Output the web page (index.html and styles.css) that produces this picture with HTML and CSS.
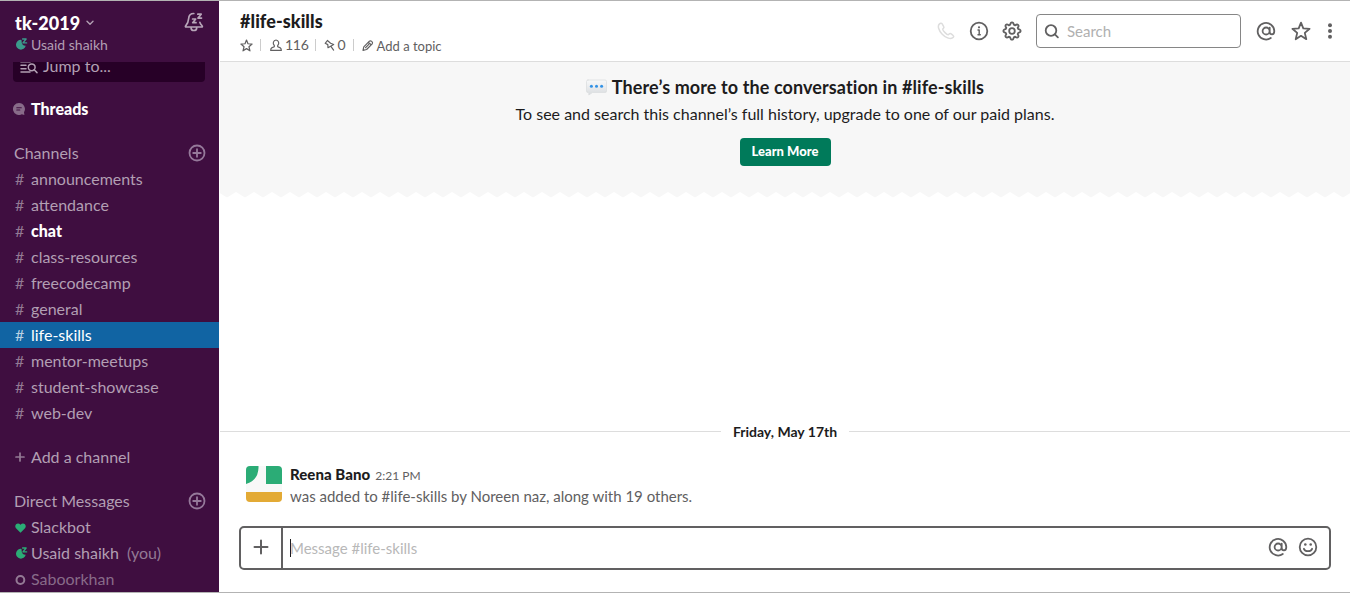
FILE: index.html
```html
<!DOCTYPE html>
<html lang="en">
<head>
<meta charset="utf-8">
<title>#life-skills</title>
<link rel="stylesheet" href="styles.css">
</head>
<body>
<svg class="defs" width="0" height="0">
  <symbol id="at" viewBox="0 0 20 20"><path d="M14.8 17A8.300 8.300 0 1 1 18.300 10c0 2.100-.8 3.300-2.300 3.300-1.500 0-2.300-.9-2.300-2.300V6.700M13.600 10a3.500 3.500 0 1 1-7 0 3.500 3.500 0 0 1 7 0z"/></symbol>
  <symbol id="star" viewBox="0 0 20 20"><path d="M10 1.600l2.300 5.700 6.300.5-4.800 4.100 1.500 6.300-5.300-3.400-5.300 3.400 1.500-6.300-4.800-4.100 6.300-.5z"/></symbol>
  <symbol id="plus-circle" viewBox="0 0 18 18"><circle cx="9" cy="9" r="7.500"/><path d="M9 5.200v7.600M5.200 9h7.600"/></symbol>
  <symbol id="snooze" viewBox="0 0 13 12"><path class="solid" d="M6.500 1.900A4.900 4.900 0 1 0 10.700 7.800Q6.500 7.800 6.500 1.900z"/><path class="zed" d="M7.600 1h3.500L8 4.900h3.600"/></symbol>
</svg>
<div class="app">
  <aside class="sidebar">
    <header class="team">
      <div class="team-row"><span class="team-name">tk-2019</span>
        <svg class="chevron" width="8" height="6" viewBox="0 0 8 6"><path d="M1 1.200l3 3 3-3"/></svg>
        <svg class="bell" width="20" height="20" viewBox="0 0 20 20"><path d="M9.800 1.500C6.300 1.500 4.800 3.800 4.600 6.700c-.2 3-.6 4.700-2.900 7.100-.5.6-.3 1.200.5 1.200h15.400c.8 0 1-.7.5-1.200-1.100-1.200-1.800-2.200-2.200-3.400M7.100 16.100c.3 3.200 5.300 3.200 5.600 0"/><path d="M13.800 2.200h3.400l-3.200 3.900h3.500M8.600 7h3.100l-3 3.700h3.300"/></svg>
      </div>
      <div class="me"><svg class="snooze teal" width="13" height="12"><use href="#snooze"/></svg><span>Usaid shaikh</span></div>
    </header>
    <div class="jump"><svg width="18" height="14" viewBox="0 0 18 14"><path d="M1 1.800h9M1 5.200h5M1 8.700h5M1 12.100h9"/><circle cx="11.700" cy="7.300" r="3.400"/><path d="M14.200 9.800l2.800 2.800"/></svg><span>Jump to...</span></div>
    <div class="row threads"><i class="mark"><svg width="12" height="12" viewBox="0 0 12 12"><path class="solid" d="M6 0a6 6 0 1 0 2.800 11.300l2.600.6-.4-2.700A6 6 0 0 0 6 0z"/><path class="lines" d="M3.800 4.800h4.500M3.800 7h3"/></svg></i><span>Threads</span></div>
    <div class="row section"><span>Channels</span><svg class="add" width="18" height="18"><use href="#plus-circle"/></svg></div>
    <div class="row"><i class="mark hash">#</i><span>announcements</span></div>
    <div class="row"><i class="mark hash">#</i><span>attendance</span></div>
    <div class="row unread"><i class="mark hash">#</i><span>chat</span></div>
    <div class="row"><i class="mark hash">#</i><span>class-resources</span></div>
    <div class="row"><i class="mark hash">#</i><span>freecodecamp</span></div>
    <div class="row"><i class="mark hash">#</i><span>general</span></div>
    <div class="row active"><i class="mark hash">#</i><span>life-skills</span></div>
    <div class="row"><i class="mark hash">#</i><span>mentor-meetups</span></div>
    <div class="row"><i class="mark hash">#</i><span>student-showcase</span></div>
    <div class="row"><i class="mark hash">#</i><span>web-dev</span></div>
    <div class="row add-channel"><i class="mark"><svg class="small-plus" width="10" height="10" viewBox="0 0 10 10"><path d="M5 1v8M1 5h8"/></svg></i><span>Add a channel</span></div>
    <div class="row section"><span>Direct Messages</span><svg class="add" width="18" height="18"><use href="#plus-circle"/></svg></div>
    <div class="row"><i class="mark"><svg class="love" width="11" height="10" viewBox="0 0 11 10"><path class="heart" d="M5.500 9.700L1 5.200C-1.400 2.500 2.500-1.500 5.500 1.800c3-3.300 6.900.7 4.500 3.400z"/></svg></i><span>Slackbot</span></div>
    <div class="row"><i class="mark"><svg class="snooze green" width="13" height="12"><use href="#snooze"/></svg></i><span>Usaid shaikh</span><span class="you">(you)</span></div>
    <div class="row away"><i class="mark"><svg width="11" height="11" viewBox="0 0 11 11"><circle class="ring" cx="5.400" cy="6" r="3.900"/></svg></i><span>Saboorkhan</span></div>
  </aside>
  <main class="main">
    <header class="topbar">
      <div class="channel">
        <h1>#life-skills</h1>
        <div class="meta">
          <svg class="line meta-star" width="13" height="13"><use href="#star"/></svg><b></b>
          <svg class="line person" width="12" height="13" viewBox="0 0 12 13"><path d="M6 1a2.800 3.100 0 0 1 1.700 5.500v1.200l2.700 1.200c.7.4.9 1.200.9 2.500H.7c0-1.300.2-2.100.9-2.500l2.700-1.200V6.500A2.800 3.100 0 0 1 6 1z"/></svg><span class="members">116</span><b></b>
          <svg class="line pin" width="11" height="13" viewBox="0 0 11 13"><path d="M3.400 1.500L1.200 4.300l2.600 1.300.2 3.100L9.700 5.500 6.600 4.200zM6.900 7.400l2.700 3.700"/></svg><span class="pins">0</span><b></b>
          <svg class="line pencil" width="12" height="13" viewBox="0 0 12 13"><path d="M1 11.400l.8-3.500 5.600-5.700c1.300-1.200 4 .9 2.800 2.600L4.600 10.500zM6.400 3.300l2.700 2.500M3.600 8.700l3.200-3.300"/></svg><span class="topic">Add a topic</span>
        </div>
      </div>
      <div class="tools">
        <svg class="phone" width="18" height="18" viewBox="0 0 18 18"><path d="M2.300 2.100C.4 3.900 1.500 8.200 5 11.900s8.200 5.700 10.500 4c1.600-1.200 1.600-1.600.3-2.700l-2-1.500c-1-.7-1.500.1-2.400.9-1 .8-6.100-4.200-5.600-5.500.4-1 1.700-1.200.9-2.500L5.200 1.900C4.400.8 3.300 1.200 2.300 2.100z"/></svg>
        <svg class="line info" width="20" height="20" viewBox="0 0 20 20"><circle cx="10" cy="10" r="8.300"/><path class="stem" d="M9 9h1.200v4.700M9 13.700h2.300"/><circle class="dot" cx="10" cy="6.300" r="1.100"/></svg>
        <svg class="line gear" width="20" height="20" viewBox="0 0 20 20"><path d="M8.200 3.700Q8.500 1.400 10 1.400t1.800 2.300l1.400.6Q15 2.900 16.100 3.900t-.4 2.900l.6 1.400q2.300.3 2.300 1.800t-2.300 1.800l-.6 1.400q1.400 1.800.4 2.900t-2.900-.4l-1.400.6q-.3 2.300-1.800 2.300t-1.800-2.300l-1.400-.6q-1.800 1.400-2.900.4t.4-2.900l-.6-1.400Q1.400 11.500 1.400 10t2.300-1.800l.6-1.400Q2.900 5 3.900 3.900t2.900.4z"/><circle cx="10" cy="10" r="2.800"/></svg>
        <label class="search"><svg class="line" width="16" height="16" viewBox="0 0 16 16"><circle cx="7" cy="7.500" r="5.300"/><path d="M10.900 11.400l3 3"/></svg><span>Search</span></label>
        <svg class="line at-top" width="20" height="20"><use href="#at"/></svg>
        <svg class="line star-top" width="20" height="20"><use href="#star"/></svg>
        <svg class="dots" width="6" height="18" viewBox="0 0 6 18"><circle cx="3" cy="3.200" r="2"/><circle cx="3" cy="9" r="2"/><circle cx="3" cy="14.800" r="2"/></svg>
      </div>
    </header>
    <section class="notice">
      <h2><svg width="21" height="17" viewBox="0 0 21 17"><defs><linearGradient id="bubble" x2="0" y2="1"><stop stop-color="#f8f9fa"/><stop offset="1" stop-color="#d9dcdf"/></linearGradient></defs><path fill="url(#bubble)" stroke="#dcdee0" stroke-width=".8" d="M2 1h17q1.500 0 1.500 1.500v9.500q0 1.500-1.500 1.500H6.500L2.800 16v-2.500H2Q.5 13.500.5 12V2.500Q.5 1 2 1z"/><g fill="#3292e6"><circle cx="5.400" cy="7.200" r="1.500"/><circle cx="10.500" cy="7.200" r="1.500"/><circle cx="15.600" cy="7.200" r="1.500"/></g></svg><span>There’s more to the conversation in #life-skills</span></h2>
      <p>To see and search this channel’s full history, upgrade to one of our paid plans.</p>
      <button>Learn More</button>
    </section>
    <svg class="zigzag" width="1131" height="6"><defs><pattern id="teeth" x="-2" width="18" height="6" patternUnits="userSpaceOnUse"><path d="M0 0h18L9 5.500z" fill="#f7f7f7"/></pattern></defs><rect width="1131" height="6" fill="url(#teeth)"/></svg>
    <div class="day"><span>Friday, May 17th</span></div>
    <article class="message">
      <svg class="avatar" width="36" height="36" viewBox="0 0 36 36"><path fill="#f8f8f8" d="M0 0h36v36H0z"/><path fill="#2bac76" d="M0 0h12.500v2Q12 14.500 0 18zM20 0h16v18H20z"/><path fill="#e3aa35" d="M0 26h36v10H0z"/></svg>
      <div class="copy"><div class="byline"><strong>Reena Bano</strong><time>2:21 PM</time></div><p>was added to #life-skills by Noreen naz, along with 19 others.</p></div>
    </article>
    <div class="composer">
      <div class="attach"><svg width="16" height="16" viewBox="0 0 16 16"><path d="M8 1.500v13M1.500 8h13"/></svg></div>
      <div class="field"><i class="caret"></i><span>Message #life-skills</span></div>
      <svg class="line" width="20" height="20"><use href="#at"/></svg>
      <svg class="line smile" width="20" height="20" viewBox="0 0 20 20"><circle cx="10" cy="10" r="8.300"/><path d="M5.900 11.800c1.300 3.200 6.900 3.200 8.200 0"/><circle class="dot" cx="7.300" cy="7.500" r="1.300"/><circle class="dot" cx="12.700" cy="7.500" r="1.300"/></svg>
    </div>
  </main>
</div>
</body>
</html>
```

FILE: styles.css
```css
* { box-sizing: border-box; }
body { margin: 0; font-family: Lato, "Noto Sans", sans-serif; font-size: 15px; color: #1d1c1d; }
h1, h2, p { margin: 0; }
svg { display: block; flex: none; fill: none; stroke-linecap: round; stroke-linejoin: round; }
span, strong, time { white-space: nowrap; }
.defs { position: absolute; }
.app { display: flex; height: 593px; border-top: 1px solid #b3b3b3; border-bottom: 1px solid #b3b3b3; overflow: hidden; background: #fff; }
.sidebar { width: 219px; flex: none; background: #3f0e40; color: #b29fb3; overflow: hidden; font-size: 16px; }
.team { height: 61px; padding: 10px 15px 0; }
.team-row { display: flex; align-items: center; height: 22px; }
.team-name { font-size: 18px; font-weight: 900; letter-spacing: .08px; color: #fff; padding-top: 1px; }
.chevron { margin: 2px 0 0 6px; stroke: #b29fb3; stroke-width: 1.4; }
.bell { margin-left: auto; stroke: #b8a6b9; stroke-width: 1.7; }
.me { display: flex; align-items: center; height: 22px; font-size: 14px; gap: 3px; }
.snooze { stroke-width: 1.4; }
.teal { stroke: #3b9b8c; fill: #3b9b8c; }
.green { stroke: #2bac76; fill: #2bac76; }
.solid { stroke: none; }
.zed { fill: none; }
.jump { height: 20px; margin: 0 14px 14px 13px; padding-left: 7px; border-radius: 0 0 4px 4px; background: #270027; display: flex; align-items: flex-start; gap: 5px; overflow: hidden; color: #b29fb3; }
.jump svg { stroke: #b29fb3; stroke-width: 1.5; margin-top: -2px; }
.jump span { line-height: 20px; margin-top: -6px; }
.row { display: flex; align-items: center; height: 26px; padding-left: 15px; }
.row > span, .hash { padding-bottom: 2px; }
.mark { width: 16px; flex: none; font-style: normal; color: #937a94; }
.love { margin-top: 2px; }
.threads { margin-bottom: 18px; color: #fff; font-weight: 900; padding-left: 13px; }
.threads .mark { width: 18px; }
.threads .solid { fill: #886b89; }
.lines { stroke: #3f0e40; stroke-width: 1.1; }
.section { padding: 0 13px 0 14px; justify-content: space-between; }
.add { stroke: #95799a; stroke-width: 1.8; }
.unread span { color: #fff; font-weight: 900; }
.active { background: #1164a3; color: #fff; }
.active .mark { color: #b8d1e3; }
.add-channel { margin: 18px 0; }
.small-plus { stroke: #937a94; stroke-width: 1.7; }
.heart { fill: #2bac76; }
.you { margin-left: 8px; color: #937a94; }
.away { color: #886b89; }
.ring { stroke: #947a95; stroke-width: 2; }
.main { flex: 1; min-width: 0; margin-left: 1px; display: flex; flex-direction: column; }
.topbar { display: flex; justify-content: space-between; height: 61px; flex: none; border-bottom: 1px solid #ddd; padding-left: 20px; }
.channel { padding-top: 9px; }
h1 { font-size: 18px; line-height: 23px; font-weight: 900; letter-spacing: .06px; }
.meta { display: flex; align-items: center; height: 24px; font-size: 14px; color: #616061; }
.meta b { width: 1px; height: 12px; background: #ccc; }
.line { stroke: #616061; stroke-width: 1.8; }
.meta .line { stroke-width: 1.2; }
.meta .meta-star { stroke-width: 1.9; margin-right: 7px; }
.person { margin: 0 3px 0 9px; }
.members { margin-right: 7px; letter-spacing: -.3px; padding-bottom: 2px; }
.pin { margin: 0 2px 0 8px; }
.pins { margin-right: 7px; padding-bottom: 2px; }
.pencil { margin: 1px 3px 0 8px; }
.topic { font-size: 13px; line-height: 20px; margin-top: 1px; }
.tools { display: flex; align-items: center; padding-right: 17px; }
.phone { stroke: #ddd; stroke-width: 1.5; margin-right: 14px; }
.info { margin-right: 13px; }
.stem { stroke-width: 1.4; }
.dot { fill: #616061; stroke: none; }
.search { display: flex; align-items: center; gap: 7px; width: 205px; height: 34px; border: 1px solid #868686; border-radius: 4px; margin: 0 15px 0 14px; padding-left: 7px; color: #b0b0b0; }
.star-top { margin: 0 16px 0 15px; }
.dots { fill: #616061; }
.notice { height: 130px; flex: none; background: #f7f7f7; display: flex; flex-direction: column; align-items: center; padding-top: 12px; }
h2 { display: flex; align-items: center; gap: 5px; height: 26px; font-size: 18px; font-weight: 700; letter-spacing: .1px; }
.notice p { font-size: 16px; line-height: 22px; margin-top: 3px; }
button { font: 900 13px/18px Lato, sans-serif; color: #fff; background: #007a5a; border: 0; border-radius: 4px; width: 91px; height: 28px; padding: 0 0 2px; margin-top: 13px; }
.day { display: flex; align-items: center; gap: 12px; margin-top: 222px; height: 22px; font-size: 14px; font-weight: 700; }
.day::before, .day::after { content: ""; height: 1px; flex: 1; background: #ddd; }
.message { display: flex; gap: 8px; padding-left: 26px; margin-top: 21px; height: 44px; }
.avatar { border-radius: 4px; margin-top: 3px; }
.byline { display: flex; align-items: baseline; gap: 5px; line-height: 22px; }
.byline strong { font-weight: 900; letter-spacing: .05px; }
time { font-size: 12px; color: #616061; }
.copy p { line-height: 18px; color: #616061; }
.composer { display: flex; align-items: center; height: 44px; margin: 19px 19px 0; border: 2px solid #616061; border-radius: 5px; padding-right: 11px; gap: 10px; }
.composer > .line { margin-top: -2px; }
.attach { width: 42px; height: 40px; border-right: 2px solid #616061; display: grid; place-items: center; stroke: #616061; stroke-width: 2; padding-bottom: 2px; }
.field { flex: 1; display: flex; align-items: center; color: #b8b8b8; margin-left: -3px; }
.field span { margin-left: -1px; }
.caret { width: 1px; height: 18px; background: #1d1c1d; }
```
